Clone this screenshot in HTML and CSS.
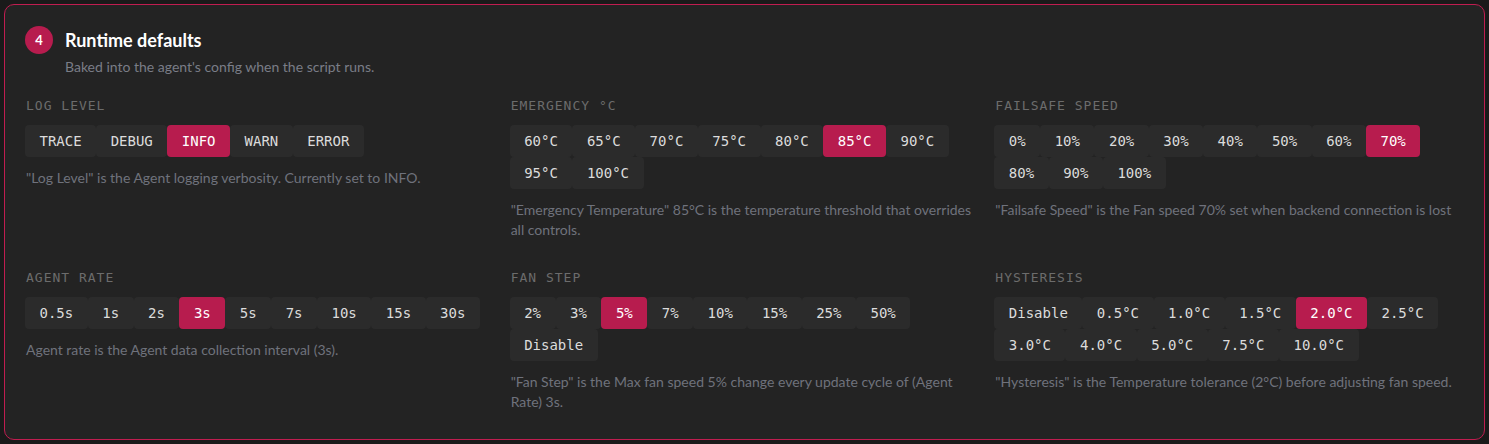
FILE: index.html
```html
<!DOCTYPE html>
<html lang="en">
<head>
   <meta charset="UTF-8">
   <meta name="viewport" content="width=device-width, initial-scale=1.0">
   <title>Runtime defaults</title>
   <link rel="stylesheet" href="styles.css">
</head>
<body>
   <section class="step-card">
       <div class="step-head">
           <span class="step-num">4</span>
           <h2>Runtime defaults</h2>
           <p class="step-sub">Baked into the agent's config when the script runs.</p>
       </div>

       <div class="fields">
           <div class="field">
               <div class="field-label">Log Level</div>
               <div class="choices">
                   <button class="choice">TRACE</button>
                   <button class="choice">DEBUG</button>
                   <button class="choice active">INFO</button>
                   <button class="choice">WARN</button>
                   <button class="choice">ERROR</button>
               </div>
               <p class="field-help">"Log Level" is the Agent logging verbosity. Currently set to INFO.</p>
           </div>

           <div class="field">
               <div class="field-label">Emergency °C</div>
               <div class="choices">
                   <button class="choice">60°C</button>
                   <button class="choice">65°C</button>
                   <button class="choice">70°C</button>
                   <button class="choice">75°C</button>
                   <button class="choice">80°C</button>
                   <button class="choice active">85°C</button>
                   <button class="choice">90°C</button>
                   <button class="choice">95°C</button>
                   <button class="choice">100°C</button>
               </div>
               <p class="field-help">"Emergency Temperature" 85°C is the temperature threshold that overrides all controls.</p>
           </div>

           <div class="field">
               <div class="field-label">Failsafe Speed</div>
               <div class="choices">
                   <button class="choice">0%</button>
                   <button class="choice">10%</button>
                   <button class="choice">20%</button>
                   <button class="choice">30%</button>
                   <button class="choice">40%</button>
                   <button class="choice">50%</button>
                   <button class="choice">60%</button>
                   <button class="choice active">70%</button>
                   <button class="choice">80%</button>
                   <button class="choice">90%</button>
                   <button class="choice">100%</button>
               </div>
               <p class="field-help">"Failsafe Speed" is the Fan speed 70% set when backend connection is lost</p>
           </div>

           <div class="field">
               <div class="field-label">Agent Rate</div>
               <div class="choices">
                   <button class="choice">0.5s</button>
                   <button class="choice">1s</button>
                   <button class="choice">2s</button>
                   <button class="choice active">3s</button>
                   <button class="choice">5s</button>
                   <button class="choice">7s</button>
                   <button class="choice">10s</button>
                   <button class="choice">15s</button>
                   <button class="choice">30s</button>
               </div>
               <p class="field-help">Agent rate is the Agent data collection interval (3s).</p>
           </div>

           <div class="field">
               <div class="field-label">Fan Step</div>
               <div class="choices">
                   <button class="choice">2%</button>
                   <button class="choice">3%</button>
                   <button class="choice active">5%</button>
                   <button class="choice">7%</button>
                   <button class="choice">10%</button>
                   <button class="choice">15%</button>
                   <button class="choice">25%</button>
                   <button class="choice">50%</button>
                   <button class="choice">Disable</button>
               </div>
               <p class="field-help">"Fan Step" is the Max fan speed 5% change every update cycle of (Agent Rate) 3s.</p>
           </div>

           <div class="field">
               <div class="field-label">Hysteresis</div>
               <div class="choices">
                   <button class="choice">Disable</button>
                   <button class="choice">0.5°C</button>
                   <button class="choice">1.0°C</button>
                   <button class="choice">1.5°C</button>
                   <button class="choice active">2.0°C</button>
                   <button class="choice">2.5°C</button>
                   <button class="choice">3.0°C</button>
                   <button class="choice">4.0°C</button>
                   <button class="choice">5.0°C</button>
                   <button class="choice">7.5°C</button>
                   <button class="choice">10.0°C</button>
               </div>
               <p class="field-help">"Hysteresis" is the Temperature tolerance (2°C) before adjusting fan speed.</p>
           </div>
       </div>
   </section>
</body>
</html>
```

FILE: styles.css
```css
* {
    margin: 0;
    padding: 0;
    box-sizing: border-box;
}

body {
    font-family: Lato, "Noto Sans", sans-serif;
    background-color: #1a1a1a;
    color: #e6e6e6;
    padding: 4px;
}

.step-card {
    background: #232323;
    border: 1px solid #c01d50;
    border-radius: 10px;
    padding: 21px 21px 27px 20px;
}

.step-head {
    display: grid;
    grid-template-columns: 28px 1fr;
    column-gap: 12px;
    align-items: center;
}

.step-num {
    width: 28px;
    height: 28px;
    border-radius: 50%;
    background: #b71c4e;
    color: #fff;
    font-size: 13px;
    font-weight: 700;
    display: flex;
    align-items: center;
    justify-content: center;
}

.step-head h2 {
    font-size: 18px;
    font-weight: 700;
    line-height: 27px;
    color: #fff;
}

.step-sub {
    grid-column: 2;
    font-size: 14px;
    line-height: 20px;
    margin-top: 3px;
    color: #7a7d87;
}

.fields {
    display: grid;
    grid-template-columns: repeat(3, 1fr);
    column-gap: 17px;
    row-gap: 30px;
    margin-top: 21px;
    padding-left: 1px;
}

.field-label {
    font-family: "DejaVu Sans Mono", monospace;
    font-size: 13px;
    line-height: 16px;
    letter-spacing: 1px;
    text-transform: uppercase;
    color: #6c6c6c;
    margin-bottom: 11px;
}

.choices {
    display: flex;
    flex-wrap: wrap;
    margin-left: -1px;
}

.choice {
    font-family: "DejaVu Sans Mono", monospace;
    font-size: 14px;
    height: 32px;
    padding: 0 14.5px;
    border: none;
    border-radius: 4px;
    background: #2b2b2b;
    color: #dcdcdc;
    cursor: pointer;
}

.choice.active {
    background: #b71c4e;
    color: #fff;
}

.field-help {
    margin-top: 11px;
    font-size: 14px;
    line-height: 20px;
    color: #6f727c;
}
```
